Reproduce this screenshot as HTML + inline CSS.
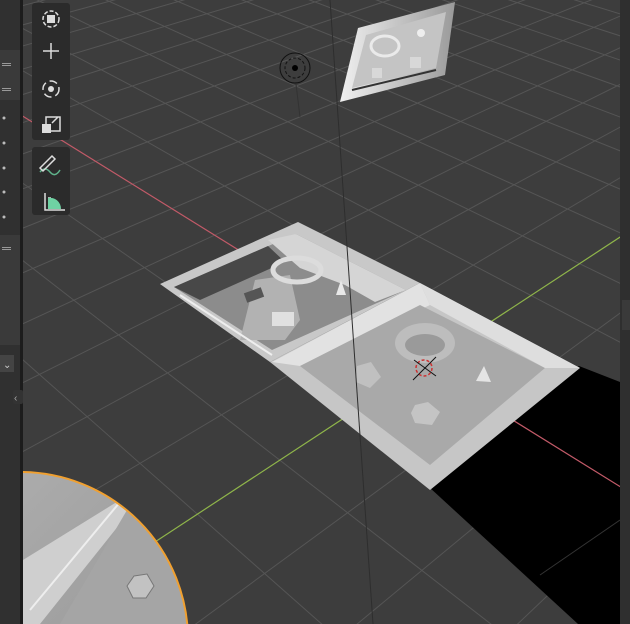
<!DOCTYPE html>
<html><head><meta charset="utf-8"><style>
html,body{margin:0;padding:0;width:630px;height:624px;overflow:hidden;background:#3d3d3d;font-family:"Liberation Sans",sans-serif}
svg{position:absolute;left:0;top:0;display:block}
</style></head><body>
<svg width="630" height="624" viewBox="0 0 630 624" xmlns="http://www.w3.org/2000/svg">
<defs>
<clipPath id="vp"><rect x="23" y="0" width="597" height="624"/></clipPath>
<clipPath id="sc"><circle cx="20" cy="640" r="168"/></clipPath>
<linearGradient id="sph" x1="0" y1="0" x2="1" y2="1"><stop offset="0" stop-color="#b5b5b5"/><stop offset="1" stop-color="#8f8f8f"/></linearGradient>
<linearGradient id="fl" x1="0" y1="0" x2="1" y2="0"><stop offset="0" stop-color="#f0f0f0"/><stop offset="1" stop-color="#9a9a9a"/></linearGradient>
</defs>
<rect width="630" height="624" fill="#3d3d3d"/>
<g id="grid" clip-path="url(#vp)" stroke="#555" stroke-width="1"></g>
<g clip-path="url(#vp)">
<polygon points="429,487 579,366 620,382 620,624 578,624" fill="#000"/>
<line x1="540" y1="575" x2="620" y2="520" stroke="#333" stroke-width="1"/>
<line x1="-100" y1="40" x2="640" y2="499" stroke="#c25a68" stroke-width="1.2"/>
<line x1="640" y1="224" x2="100" y2="578" stroke="#8fb54a" stroke-width="1.2"/>
<!-- left tray -->
<polygon points="160,284 298,222 420,283 270,362" fill="#c8c8c8"/>
<polygon points="174,287 296,234 406,290 272,350" fill="#8c8c8c"/>
<polygon points="174,287 268,246 285,262 200,300" fill="#484848"/>
<polygon points="268,240 296,234 406,290 375,302 345,285 300,268" fill="#d5d5d5"/>
<polygon points="255,280 290,275 300,320 285,340 240,340" fill="#b2b2b2"/>
<ellipse cx="297" cy="270" rx="24" ry="12" fill="none" stroke="#dcdcdc" stroke-width="5"/>
<rect x="245" y="290" width="18" height="10" fill="#555" transform="rotate(-20 254 295)"/>
<rect x="272" y="312" width="22" height="14" fill="#e0e0e0"/>
<polygon points="336,295 341,280 346,295" fill="#e8e8e8"/>
<line x1="180" y1="295" x2="272" y2="355" stroke="#eee" stroke-width="2"/>
<!-- right tray -->
<polygon points="270,362 420,283 580,368 430,490" fill="#c6c6c6"/>
<polygon points="272,362 420,283 430,305 300,366" fill="#e2e2e2"/>
<polygon points="300,366 420,305 545,368 430,465" fill="#a9a9a9"/>
<polygon points="420,283 580,368 545,368 430,305" fill="#dedede"/>
<ellipse cx="425" cy="343" rx="30" ry="20" fill="#bdbdbd"/>
<ellipse cx="425" cy="345" rx="20" ry="11" fill="#9a9a9a"/>
<polygon points="357,366 371,362 381,377 370,388 356,382" fill="#c0c0c0"/>
<polygon points="415,405 428,402 440,412 432,425 415,423 411,413" fill="#c4c4c4"/>
<polygon points="476,381 484,366 491,382" fill="#e4e4e4"/>
<circle cx="424" cy="368" r="8" fill="none" stroke="#c33" stroke-width="1.5" stroke-dasharray="3 2"/>
<line x1="413" y1="380" x2="436" y2="357" stroke="#111"/>
<line x1="414" y1="360" x2="436" y2="376" stroke="#111"/>
<!-- floating plane -->
<polygon points="340,102 358,28 455,2 445,75" fill="url(#fl)"/>
<polygon points="352,88 366,35 446,12 436,68" fill="#c4c4c4"/>
<ellipse cx="385" cy="46" rx="14" ry="10" fill="none" stroke="#eaeaea" stroke-width="3"/>
<rect x="372" y="68" width="10" height="10" fill="#d8d8d8"/>
<rect x="410" y="57" width="11" height="11" fill="#d8d8d8"/>
<circle cx="421" cy="33" r="4" fill="#eee"/>
<line x1="352" y1="90" x2="436" y2="70" stroke="#333" stroke-width="2"/>
<!-- empty -->
<circle cx="295" cy="68" r="15" fill="none" stroke="#111" stroke-width="1"/>
<circle cx="295" cy="68" r="10" fill="none" stroke="#111" stroke-width="1" stroke-dasharray="3 2"/>
<circle cx="295" cy="68" r="3" fill="#000"/>
<line x1="296" y1="84" x2="300" y2="117" stroke="#333"/>
<line x1="330" y1="0" x2="373" y2="624" stroke="#2e2e2e" stroke-width="1"/>
<!-- sphere -->
<circle cx="20" cy="640" r="168" fill="url(#sph)"/>
<g clip-path="url(#sc)">
<polygon points="23,560 120,500 135,505 40,624 23,624" fill="#cfcfcf"/>
<line x1="30" y1="610" x2="120" y2="502" stroke="#eee" stroke-width="2"/>
<polygon points="130,505 200,540 200,624 60,624" fill="#a5a5a5"/>
<polygon points="134,576 147,574 154,586 146,598 133,598 127,586" fill="#c2c2c2" stroke="#777"/>
</g>
<circle cx="20" cy="640" r="168" fill="none" stroke="#f0a030" stroke-width="2"/>
</g>
<!-- left panel -->
<rect x="0" y="0" width="21" height="624" fill="#303030"/>
<rect x="0" y="50" width="21" height="50" fill="#3a3a3a"/>
<rect x="0" y="235" width="21" height="110" fill="#3a3a3a"/>
<rect x="0" y="355" width="14" height="17" fill="#444"/>
<text x="3" y="368" fill="#ccc" font-size="10">⌄</text>
<g fill="#bbb"><circle cx="4" cy="118" r="1.5"/><circle cx="4" cy="143" r="1.5"/><circle cx="4" cy="168" r="1.5"/><circle cx="4" cy="192" r="1.5"/><circle cx="4" cy="217" r="1.5"/></g>
<g fill="#999"><rect x="2" y="63" width="9" height="1"/><rect x="2" y="65" width="9" height="1"/><rect x="2" y="88" width="9" height="1"/><rect x="2" y="90" width="9" height="1"/><rect x="2" y="247" width="9" height="1"/><rect x="2" y="249" width="9" height="1"/></g>
<rect x="20" y="0" width="3" height="624" fill="#1c1c1c"/>
<rect x="13" y="390" width="10" height="14" rx="2" fill="#333"/>
<text x="14" y="401" fill="#aaa" font-size="10">‹</text>
<rect x="620" y="0" width="10" height="624" fill="#2f2f2f"/>
<rect x="622" y="300" width="8" height="30" fill="#3a3a3a"/>
<!-- toolbar -->
<rect x="32" y="3" width="38" height="137" rx="3" fill="#2b2b2b"/>
<rect x="32" y="147" width="38" height="68" rx="3" fill="#2b2b2b"/>
<g stroke="#ddd" fill="none" stroke-width="1.5">
<circle cx="51" cy="19" r="8" stroke-dasharray="4 2"/>
<path d="M51 43v16M43 51h16"/><circle cx="51" cy="89" r="8" stroke-dasharray="8 4"/>
<path d="M40 172q5-6 10 0t10-2" stroke="#5fb38b"/>
<path d="M40 168l12-12 3 3-12 12z"/>
<path d="M45 193v17h20M48 198h3M48 202h3M48 206h3"/>
</g>
<rect x="47" y="15" width="8" height="8" fill="#ddd"/>
<circle cx="51" cy="89" r="3" fill="#ddd"/>
<rect x="42" y="124" width="9" height="9" fill="#ddd"/>
<path d="M46 128v-11h14v14h-9M52 123l6-6" stroke="#ddd" fill="none" stroke-width="1.5"/>
<path d="M48 209v-11a11 11 0 0 1 13 11z" fill="#6fd1a3"/>
</svg>
<script>
(function(){
var g=document.getElementById('grid'),O=[420,370],V1=[-900,-456],V2=[1600,-405],k1=21,k2=19,s="";
function P(V,k,t){var f=t/(t+k);return [O[0]+(V[0]-O[0])*f,O[1]+(V[1]-O[1])*f];}
function line(V,p){var dx=p[0]-V[0],dy=p[1]-V[1],m=3000/Math.hypot(dx,dy);return '<line x1="'+V[0]+'" y1="'+V[1]+'" x2="'+(V[0]+dx*m)+'" y2="'+(V[1]+dy*m)+'"/>';}
for(var t=-18;t<=60;t++){ if(t===0)continue; s+=line(V1,P(V2,k2,t)); s+=line(V2,P(V1,k1,t)); }
g.innerHTML=s;
})();
</script>
</body></html>
